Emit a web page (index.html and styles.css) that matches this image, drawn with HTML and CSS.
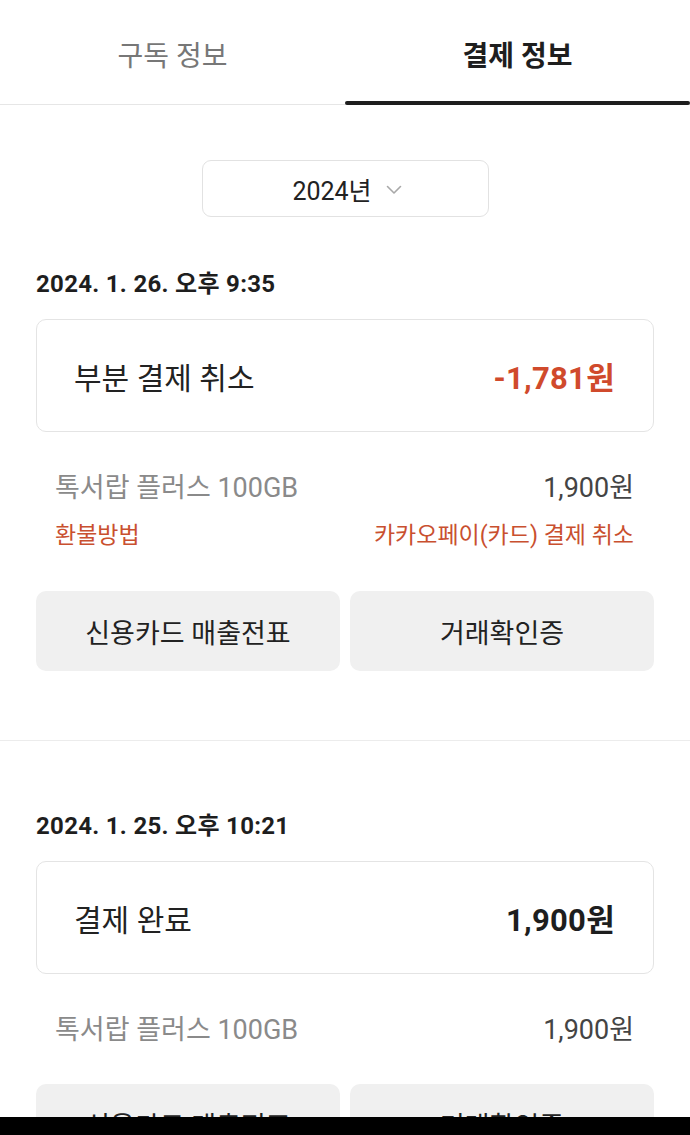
FILE: index.html
```html
<!DOCTYPE html>
<html lang="ko">
<head>
    <meta charset="UTF-8">
    <meta name="viewport" content="width=device-width, initial-scale=1.0">
    <title>결제 정보</title>
    <link rel="stylesheet" href="styles.css">
</head>
<body>
    <div class="tabs">
        <div class="tab">구독 정보</div>
        <div class="tab tab-active">결제 정보</div>
    </div>

    <div class="year-row">
        <div class="year-select">
            <span>2024년</span>
            <svg class="chevron" width="16" height="10" viewBox="0 0 16 10">
                <path d="M1.5 1.5 L8 8 L14.5 1.5" fill="none" stroke="#a8a8a8" stroke-width="1.6" stroke-linecap="round" stroke-linejoin="round"/>
            </svg>
        </div>
    </div>

    <div class="payment first">
        <div class="payment-date">2024. 1. 26. 오후 9:35</div>
        <div class="summary">
            <span class="summary-label">부분 결제 취소</span>
            <span class="summary-amount amount-cancel">-1,781원</span>
        </div>
        <div class="item-row">
            <span class="item-name">톡서랍 플러스 100GB</span>
            <span class="item-price">1,900원</span>
        </div>
        <div class="refund-row">
            <span>환불방법</span>
            <span>카카오페이(카드) 결제 취소</span>
        </div>
        <div class="actions">
            <button class="action-btn">신용카드 매출전표</button>
            <button class="action-btn">거래확인증</button>
        </div>
    </div>

    <div class="payment">
        <div class="payment-date">2024. 1. 25. 오후 10:21</div>
        <div class="summary">
            <span class="summary-label">결제 완료</span>
            <span class="summary-amount">1,900원</span>
        </div>
        <div class="item-row">
            <span class="item-name">톡서랍 플러스 100GB</span>
            <span class="item-price">1,900원</span>
        </div>
        <div class="actions actions-tight">
            <button class="action-btn">신용카드 매출전표</button>
            <button class="action-btn">거래확인증</button>
        </div>
    </div>

    <div class="nav-bar"></div>
</body>
</html>
```

FILE: styles.css
```css
* {
    margin: 0;
    padding: 0;
    box-sizing: border-box;
}

body {
    font-family: Roboto, "Noto Sans CJK KR", sans-serif;
    background: #fff;
    color: #222;
    width: 690px;
    height: 1135px;
    overflow: hidden;
}

.tabs {
    display: flex;
    height: 105px;
    border-bottom: 1px solid #e6e6e6;
}

.tab {
    flex: 1;
    display: flex;
    align-items: center;
    justify-content: center;
    padding-top: 3px;
    font-size: 28px;
    color: #777;
    position: relative;
}

.tab-active {
    color: #1e1e1e;
    font-weight: 700;
}

.tab-active::after {
    content: '';
    position: absolute;
    left: 0;
    right: 0;
    bottom: -1px;
    height: 4px;
    border-radius: 2px;
    background: #1e1e1e;
}

.year-row {
    display: flex;
    justify-content: center;
    padding-top: 55px;
}

.year-select {
    width: 287px;
    height: 57px;
    border: 1px solid #e2e2e2;
    border-radius: 9px;
    display: flex;
    align-items: center;
    justify-content: center;
    gap: 14px;
    padding-left: 4px;
    font-size: 25px;
    color: #222;
}

.chevron {
    margin-top: 2px;
}

.payment {
    padding: 70px 36px 0;
}

.payment.first {
    padding-top: 52px;
    padding-bottom: 69px;
    border-bottom: 1px solid #ececec;
}

.payment-date {
    font-size: 24px;
    font-weight: 700;
    line-height: 30px;
    color: #1e1e1e;
    letter-spacing: 0.3px;
}

.summary {
    margin-top: 20px;
    height: 113px;
    border: 1px solid #e4e4e4;
    border-radius: 10px;
    display: flex;
    align-items: center;
    justify-content: space-between;
    padding: 0 38px 0 37px;
}

.summary-label {
    font-size: 30px;
    color: #222;
}

.summary-amount {
    font-size: 31px;
    font-weight: 700;
    color: #1e1e1e;
    letter-spacing: 0.3px;
}

.amount-cancel {
    color: #d04a2c;
}

.item-row {
    margin-top: 38px;
    display: flex;
    justify-content: space-between;
    align-items: center;
    padding: 0 20px 0 19px;
    line-height: 36px;
}

.item-name {
    font-size: 27px;
    color: #8a8a8a;
}

.item-price {
    font-size: 27px;
    color: #444;
}

.refund-row {
    margin-top: 15px;
    display: flex;
    justify-content: space-between;
    padding: 0 20px 0 19px;
    font-size: 23px;
    line-height: 30px;
    color: #c9502f;
}

.actions {
    margin-top: 40px;
    display: grid;
    grid-template-columns: 1fr 1fr;
    gap: 10px;
}

.actions-tight {
    margin-top: 36px;
}

.action-btn {
    height: 80px;
    border: none;
    border-radius: 10px;
    background: #f0f0f0;
    font-family: inherit;
    font-size: 27px;
    color: #222;
}

.nav-bar {
    position: fixed;
    left: 0;
    right: 0;
    bottom: 0;
    height: 18px;
    background: #000;
}
```
